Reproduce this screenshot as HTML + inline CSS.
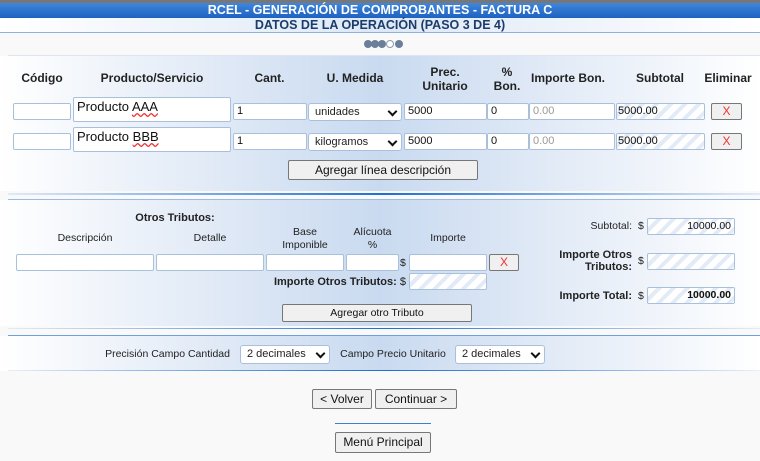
<!DOCTYPE html>
<html><head><meta charset="utf-8"><style>
*{box-sizing:border-box;margin:0;padding:0}
body{width:760px;height:461px;background:#f9f9f9;font-family:"Liberation Sans",Arial,sans-serif;position:relative;overflow:hidden;color:#222}
.a{position:absolute}
.sec{position:absolute;left:0;width:760px;background:linear-gradient(90deg,#fff 0%,#e4ecf7 25%,#c9daf0 50%,#e4ecf7 75%,#fff 100%)}
.inp{position:absolute;height:17px;background:#fff;border:1px solid #a9c0dc;border-radius:2px;font-size:11px;padding:1px 3px;line-height:13px;color:#111}
.ro{background:repeating-linear-gradient(135deg,#fff 0 6px,#e3ebf6 6px 10px)}
.btn{position:absolute;background:#f0f0f0;border:1px solid #777;border-radius:2px;font-size:12px;text-align:center;color:#111;white-space:nowrap}
.x{color:#e33;font-size:12px;line-height:15px}
.h{position:absolute;font-size:12px;font-weight:bold;text-align:center;line-height:14px;color:#222}
.l{position:absolute;font-size:10.5px;text-align:center;line-height:13px;color:#222;white-space:nowrap}
.sel{position:absolute;height:18px;background:#fff;border:1px solid #a9c0dc;border-radius:3px;font-size:11px;padding:2px 6px;line-height:13px}
.sel:after{content:"";position:absolute;right:5px;top:4px;width:5px;height:5px;border-right:2px solid #111;border-bottom:2px solid #111;transform:rotate(45deg)}
.line{position:absolute;left:8px;width:752px;height:2px;background:linear-gradient(90deg,rgba(30,110,210,.1),#1e6fd2 50%,rgba(30,110,210,.1))}
.dot{position:absolute;top:40px;width:8px;height:8px;border-radius:50%;background:#6a7f99}
</style></head><body>
<div class="a" style="left:0;top:0;width:760px;height:3px;background:#777"></div>
<div class="a" style="left:0;top:3px;width:760px;height:15px;background:linear-gradient(#3f86dc,#1d62c0);color:#fff;font-weight:bold;font-size:12.5px;text-align:center;line-height:15px">RCEL - GENERACIÓN DE COMPROBANTES - FACTURA C</div>
<div class="a" style="left:0;top:18px;width:760px;height:15px;background:linear-gradient(90deg,#fff,#dde8f6 50%,#fff);color:#1b3c6b;font-weight:bold;font-size:12.5px;text-align:center;line-height:14px;border-bottom:1px solid #8fb1dd">DATOS DE LA OPERACIÓN (PASO 3 DE 4)</div>
<div class="dot" style="left:364px"></div><div class="dot" style="left:371px"></div><div class="dot" style="left:378px"></div>
<div class="dot" style="left:386px;background:#fff;border:1px solid #8a9bb0"></div><div class="dot" style="left:395px"></div>
<div class="a" style="left:8px;top:55px;width:752px;height:1px;background:#dde6f0"></div>

<div class="sec" style="top:56px;height:135px"></div>
<div class="h" style="left:13px;top:71px;width:58px">Código</div>
<div class="h" style="left:73px;top:71px;width:158px">Producto/Servicio</div>
<div class="h" style="left:233px;top:71px;width:73px">Cant.</div>
<div class="h" style="left:308px;top:71px;width:94px">U. Medida</div>
<div class="h" style="left:404px;top:65px;width:82px">Prec.<br>Unitario</div>
<div class="h" style="left:487px;top:65px;width:40px">%<br>Bon.</div>
<div class="h" style="left:529px;top:71px;width:78px">Importe Bon.</div>
<div class="h" style="left:616px;top:71px;width:88px">Subtotal</div>
<div class="h" style="left:704px;top:71px;width:48px">Eliminar</div>

<div class="inp" style="left:13px;top:103px;width:58px"></div>
<div class="inp" style="left:73px;top:97px;width:158px;height:25px;font-size:13px;line-height:15px">Producto <u style="text-decoration:underline wavy #e33">AAA</u></div>
<div class="inp" style="left:233px;top:103px;width:74px">1</div>
<div class="sel" style="left:308px;top:103px;width:94px">unidades</div>
<div class="inp" style="left:404px;top:103px;width:83px">5000</div>
<div class="inp" style="left:487px;top:103px;width:42px">0</div>
<div class="inp" style="left:529px;top:103px;width:86px;color:#999">0.00</div>
<div class="inp ro" style="left:616px;top:103px;width:89px;padding-left:1px">5000.00</div>
<div class="btn x" style="left:711px;top:103px;width:31px;height:17px">X</div>

<div class="inp" style="left:13px;top:133px;width:58px"></div>
<div class="inp" style="left:73px;top:127px;width:158px;height:25px;font-size:13px;line-height:15px">Producto <u style="text-decoration:underline wavy #e33">BBB</u></div>
<div class="inp" style="left:233px;top:133px;width:74px">1</div>
<div class="sel" style="left:308px;top:133px;width:94px">kilogramos</div>
<div class="inp" style="left:404px;top:133px;width:83px">5000</div>
<div class="inp" style="left:487px;top:133px;width:42px">0</div>
<div class="inp" style="left:529px;top:133px;width:86px;color:#999">0.00</div>
<div class="inp ro" style="left:616px;top:133px;width:89px;padding-left:1px">5000.00</div>
<div class="btn x" style="left:711px;top:133px;width:31px;height:17px">X</div>

<div class="btn" style="left:288px;top:160px;width:190px;height:20px;line-height:18px">Agregar línea descripción</div>
<div class="line" style="top:193px"></div>
<div class="a" style="left:8px;top:199px;width:752px;height:1px;background:#9cbbe2"></div>

<div class="sec" style="top:200px;height:126px"></div>
<div class="h" style="left:130px;top:211px;width:90px;font-size:11px">Otros Tributos:</div>
<div class="l" style="left:16px;top:232px;width:138px">Descripción</div>
<div class="l" style="left:156px;top:232px;width:108px">Detalle</div>
<div class="l" style="left:266px;top:226px;width:78px">Base<br>Imponible</div>
<div class="l" style="left:346px;top:226px;width:53px">Alícuota<br>%</div>
<div class="l" style="left:409px;top:232px;width:78px">Importe</div>
<div class="inp" style="left:16px;top:254px;width:138px"></div>
<div class="inp" style="left:156px;top:254px;width:108px"></div>
<div class="inp" style="left:266px;top:254px;width:78px"></div>
<div class="inp" style="left:346px;top:254px;width:53px"></div>
<div class="l" style="left:400px;top:257px">$</div>
<div class="inp" style="left:409px;top:254px;width:78px"></div>
<div class="btn x" style="left:489px;top:254px;width:30px;height:17px">X</div>
<div class="h" style="left:250px;top:275px;width:156px;text-align:right;font-size:11px">Importe Otros Tributos: <span style="font-weight:normal">$</span></div>
<div class="inp ro" style="left:409px;top:273px;width:78px"></div>
<div class="btn" style="left:282px;top:304px;width:190px;height:18px;font-size:10.5px;line-height:16px">Agregar otro Tributo</div>

<div class="l" style="left:560px;top:220px;width:72px;text-align:right">Subtotal:</div>
<div class="l" style="left:638px;top:220px">$</div>
<div class="inp ro" style="left:647px;top:218px;width:88px;text-align:right;font-size:10.5px">10000.00</div>
<div class="h" style="left:550px;top:249px;width:82px;text-align:right;font-size:11px;line-height:12px">Importe Otros<br>Tributos:</div>
<div class="l" style="left:638px;top:255px">$</div>
<div class="inp ro" style="left:647px;top:253px;width:88px"></div>
<div class="h" style="left:540px;top:289px;width:92px;text-align:right;font-size:11px">Importe Total:</div>
<div class="l" style="left:638px;top:290px">$</div>
<div class="inp ro" style="left:647px;top:287px;width:88px;text-align:right;font-weight:bold;font-size:10.5px">10000.00</div>

<div class="line" style="top:328px;height:1px"></div>
<div class="a" style="left:8px;top:335px;width:752px;height:1px;background:#6fa0dd"></div>
<div class="sec" style="top:336px;height:35px"></div>
<div class="l" style="left:100px;top:348px;width:130px;text-align:right">Precisión Campo Cantidad</div>
<div class="sel" style="left:240px;top:345px;width:90px;height:19px">2 decimales</div>
<div class="l" style="left:338px;top:348px;width:110px">Campo Precio Unitario</div>
<div class="sel" style="left:455px;top:345px;width:90px;height:19px">2 decimales</div>
<div class="line" style="top:370px;height:1px"></div>

<div class="btn" style="left:312px;top:389px;width:60px;height:20px;line-height:18px">&lt; Volver</div>
<div class="btn" style="left:375px;top:389px;width:82px;height:20px;line-height:18px">Continuar &gt;</div>
<div class="a" style="left:335px;top:423px;width:96px;height:1px;background:#3b7fd4"></div>
<div class="btn" style="left:335px;top:432px;width:96px;height:21px;line-height:19px">Menú Principal</div>
</body></html>
